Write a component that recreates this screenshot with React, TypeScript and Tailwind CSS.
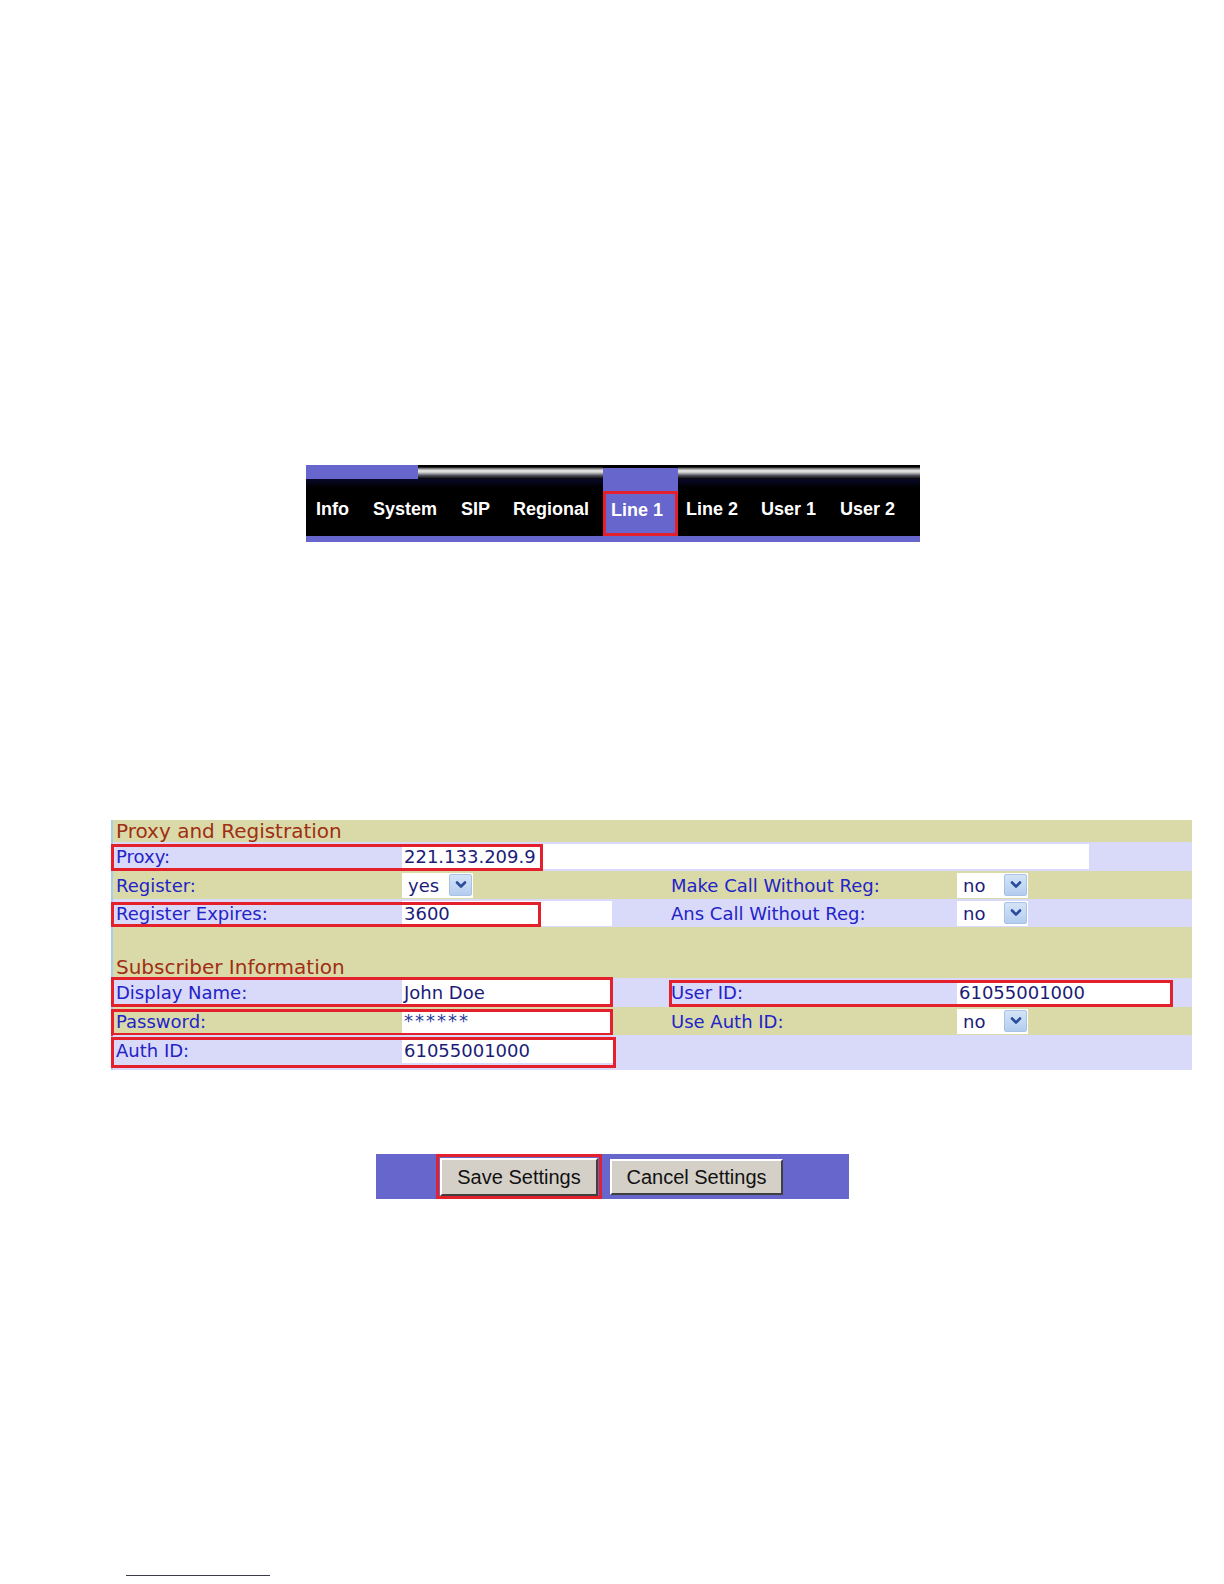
import React from "react";

const PURPLE = "bg-[#6666cc]";
const RED_BOX = "absolute border-[3px] border-[#e4202c] pointer-events-none";
const chrome =
  "bg-[linear-gradient(to_bottom,#000_0%,#000_14%,#9a9a9a_28%,#ececec_42%,#c4c4c4_55%,#50505c_75%,#000_100%)]";

const tabs = [
  { label: "Info", w: "w-[57px]" },
  { label: "System", w: "w-[88px]" },
  { label: "SIP", w: "w-[52px]" },
  { label: "Regional", w: "w-[90px]" },
  { label: "Line 1", w: "w-[83px]", active: true },
  { label: "Line 2", w: "w-[75px]" },
  { label: "User 1", w: "w-[79px]" },
  { label: "User 2", w: "flex-1" },
];

const NavBar = () => (
  <div className="ml-[306px] mt-[465px] w-[614px]">
    <div className="flex h-[14px]">
      <div className={`w-[112px] ${PURPLE}`} />
      <div className={`w-[185px] ${chrome}`} />
      <div className="w-[75px] flex flex-col">
        <div className="h-[3px] bg-black" />
        <div className={`flex-1 ${PURPLE}`} />
      </div>
      <div className={`flex-1 ${chrome}`} />
    </div>
    <div className="h-[57px] flex pl-[10px] bg-[linear-gradient(to_bottom,#080828_0px,#000_9px)] font-['Liberation_Sans',Arial,sans-serif] font-bold text-[18px] text-white">
      {tabs.map((t) =>
        t.active ? (
          <div key={t.label} className={`${t.w} shrink-0 flex`}>
            <div className={`w-[75px] ${PURPLE} flex flex-col justify-end`}>
              <div className="h-[45px] border-[3px] border-[#e4202c] flex items-center pl-[5px] pb-[7px] whitespace-nowrap">
                {t.label}
              </div>
            </div>
          </div>
        ) : (
          <div
            key={t.label}
            className={`${t.w} shrink-0 flex items-center pt-[4px] whitespace-nowrap`}
          >
            {t.label}
          </div>
        )
      )}
    </div>
    <div className={`h-[6px] ${PURPLE}`} />
  </div>
);

const KHAKI = "bg-[#dadaa8]";
const LAV = "bg-[#d9d9f9]";

const Label = ({ children, w }: { children?: React.ReactNode; w: string }) => (
  <div className={`${w} shrink-0 pl-[3px] text-[#2323c8] whitespace-nowrap`}>
    {children}
  </div>
);

const Input = ({ value, w }: { value: string; w: string }) => (
  <div
    className={`${w} h-[25px] bg-white text-[#1c1c78] pl-[2px] leading-[25px] whitespace-nowrap`}
  >
    {value}
  </div>
);

const Select = ({ value }: { value: string }) => (
  <div className="w-[71px] h-[25px] bg-white flex items-center text-[#1c1c78]">
    <span className="pl-[6px] leading-[25px]">{value}</span>
    <div className="ml-auto mr-[1px] w-[23px] h-[22px] rounded-[2px] border border-[#a8c2e6] bg-[linear-gradient(to_bottom,#d4e4f8,#b4cdee)] flex items-center justify-center">
      <svg width="14" height="14" viewBox="0 0 14 14">
        <polyline
          points="3,4.5 7,8.5 11,4.5"
          fill="none"
          stroke="#2a4c9c"
          strokeWidth="2.6"
          strokeLinecap="round"
          strokeLinejoin="round"
        />
      </svg>
    </div>
  </div>
);

const Row = ({
  bg,
  h,
  children,
}: {
  bg: string;
  h: string;
  children?: React.ReactNode;
}) => <div className={`relative flex items-center ${bg} ${h}`}>{children}</div>;

const Header = ({ text, h }: { text: string; h: string }) => (
  <div
    className={`${KHAKI} ${h} flex items-end pl-[3px] text-[20px] leading-[22px] text-[#a02e14] whitespace-nowrap`}
  >
    {text}
  </div>
);

const Form = () => (
  <div className="ml-[111px] mt-[278px] w-[1081px] border-l-2 border-[#a6cdf0] font-['DejaVu_Sans',Verdana,sans-serif] text-[18px]">
    <Header text="Proxy and Registration" h="h-[22px]" />
    <Row bg={LAV} h="h-[29px]">
      <Label w="w-[289px]">Proxy:</Label>
      <Input value="221.133.209.9" w="w-[687px]" />
      <div className={`${RED_BOX} left-[-2px] top-[2px] w-[432px] h-[27px]`} />
    </Row>
    <Row bg={KHAKI} h="h-[28px]">
      <Label w="w-[289px]">Register:</Label>
      <div className="w-[266px] shrink-0">
        <Select value="yes" />
      </div>
      <Label w="w-[289px]">Make Call Without Reg:</Label>
      <Select value="no" />
    </Row>
    <Row bg={LAV} h="h-[28px]">
      <Label w="w-[289px]">Register Expires:</Label>
      <div className="w-[266px] shrink-0">
        <Input value="3600" w="w-[210px]" />
      </div>
      <Label w="w-[289px]">Ans Call Without Reg:</Label>
      <Select value="no" />
      <div className={`${RED_BOX} left-[-2px] top-[3px] w-[430px] h-[25px]`} />
    </Row>
    <div className={`${KHAKI} h-[28px]`} />
    <Header text="Subscriber Information" h="h-[23px]" />
    <Row bg={LAV} h="h-[29px]">
      <Label w="w-[289px]">Display Name:</Label>
      <div className="w-[266px] shrink-0">
        <Input value="John Doe" w="w-[210px]" />
      </div>
      <Label w="w-[289px]">User ID:</Label>
      <Input value="61055001000" w="w-[215px]" />
      <div className={`${RED_BOX} left-[-2px] top-[-1px] w-[502px] h-[30px]`} />
      <div className={`${RED_BOX} left-[556px] top-[2px] w-[504px] h-[27px]`} />
    </Row>
    <Row bg={KHAKI} h="h-[28px]">
      <Label w="w-[289px]">Password:</Label>
      <div className="w-[266px] shrink-0">
        <div className="w-[210px] h-[25px] bg-white text-[#2a3a9a] pl-[2px] leading-[24px] tracking-[2px] text-[18px]">
          ******
        </div>
      </div>
      <Label w="w-[289px]">Use Auth ID:</Label>
      <Select value="no" />
      <div className={`${RED_BOX} left-[-2px] top-[2px] w-[502px] h-[27px]`} />
    </Row>
    <Row bg={LAV} h="h-[35px]">
      <div className="flex items-center self-start h-[31px]">
        <Label w="w-[289px]">Auth ID:</Label>
        <Input value="61055001000" w="w-[212px]" />
      </div>
      <div className={`${RED_BOX} left-[-2px] top-[2px] w-[505px] h-[31px]`} />
    </Row>
  </div>
);

const Buttons = () => (
  <div
    className={`ml-[376px] mt-[84px] w-[473px] h-[45px] ${PURPLE} flex items-center font-['Liberation_Sans',Arial,sans-serif] text-[20px] text-[#111]`}
  >
    <div className="ml-[60px] w-[166px] h-[45px] border-[3px] border-[#e4202c] flex items-center justify-center">
      <button className="w-[158px] h-[38px] bg-[#d4d0c8] border-2 border-t-white border-l-white border-b-[#404040] border-r-[#404040]">
        Save Settings
      </button>
    </div>
    <button className="ml-[8px] w-[173px] h-[36px] bg-[#d4d0c8] border-2 border-t-white border-l-white border-b-[#404040] border-r-[#404040]">
      Cancel Settings
    </button>
  </div>
);

export default function App() {
  return (
    <div className="w-[1224px] h-[1584px] bg-white overflow-hidden flow-root">
      <NavBar />
      <Form />
      <Buttons />
      <div className="ml-[126px] mt-[376px] w-[144px] h-px bg-[#3a3a4a]" />
    </div>
  );
}
